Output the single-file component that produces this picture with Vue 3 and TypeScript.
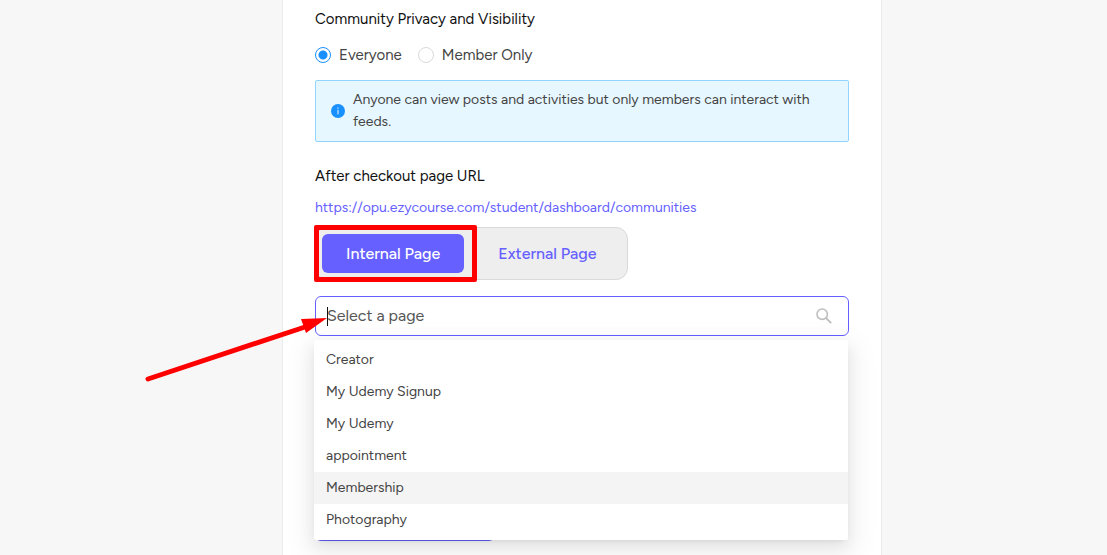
<script setup lang="ts">
import { ref } from 'vue'

type Visibility = 'everyone' | 'members'
type PageKind = 'internal' | 'external'

const visibility = ref<Visibility>('everyone')
const pageKind = ref<PageKind>('internal')
const search = ref('')
const activePage = ref('Membership')
const pages: string[] = ['Creator', 'My Udemy Signup', 'My Udemy', 'appointment', 'Membership', 'Photography']
</script>

<template>
  <div class="page">
    <main class="card">
      <fieldset class="privacy">
        <legend class="heading">Community Privacy and Visibility</legend>
        <div class="radios">
          <label class="radio">
            <input v-model="visibility" type="radio" name="visibility" value="everyone" />
            <span>Everyone</span>
          </label>
          <label class="radio">
            <input v-model="visibility" type="radio" name="visibility" value="members" />
            <span>Member Only</span>
          </label>
        </div>
      </fieldset>

      <div class="alert" role="status">
        <svg class="alert-icon" viewBox="0 0 14 14" aria-hidden="true">
          <circle cx="7" cy="7" r="7" fill="#1890ff" />
          <rect x="6.5" y="3.4" width="1" height="1.3" fill="#e6f7ff" />
          <rect x="6.5" y="5.8" width="1" height="4.6" fill="#e6f7ff" />
        </svg>
        <p>Anyone can view posts and activities but only members can interact with feeds.</p>
      </div>

      <h2 class="heading">After checkout page URL</h2>
      <a class="url" href="https://opu.ezycourse.com/student/dashboard/communities">https://opu.ezycourse.com/student/dashboard/communities</a>

      <div class="tabs">
        <button type="button" class="tab" :class="{ selected: pageKind === 'internal' }" @click="pageKind = 'internal'">Internal Page</button>
        <button type="button" class="tab" :class="{ selected: pageKind === 'external' }" @click="pageKind = 'external'">External Page</button>
        <span class="highlight" aria-hidden="true"></span>
      </div>

      <div class="picker">
        <div class="field">
          <input v-model="search" type="text" placeholder="Select a page" aria-label="Select a page" />
          <span class="caret" aria-hidden="true"></span>
          <svg class="search-icon" viewBox="0 0 16 16" fill="none" stroke="#bfbfbf" aria-hidden="true">
            <circle cx="6.2" cy="6.2" r="5.2" stroke-width="1.6" />
            <path d="M10 10l5.2 5.2" stroke-width="1.9" />
          </svg>
        </div>
        <ul class="options" role="listbox" aria-label="Pages">
          <li
            v-for="page in pages"
            :key="page"
            role="option"
            :aria-selected="page === activePage"
            :class="{ active: page === activePage }"
            @mouseenter="activePage = page"
          >{{ page }}</li>
        </ul>
        <svg class="arrow" viewBox="0 0 182 66" aria-hidden="true">
          <path d="M3 63L160 11" stroke="#f00" stroke-width="5" stroke-linecap="round" />
          <path d="M156 3L182 2L161 17Z" fill="#f00" />
        </svg>
      </div>

      <button type="button" class="save" aria-label="Save"></button>
    </main>
  </div>
</template>

<style>
body {
  margin: 0;
  background: #f7f7f7;
}
</style>

<style scoped>
.page {
  box-sizing: border-box;
  min-height: 100vh;
  padding-left: 57px;
  display: flex;
  justify-content: center;
  overflow: hidden;
  background: #f7f7f7;
  color: #444;
  font-family: Figtree, Lato, "Liberation Sans", sans-serif;
  font-size: 14px;
  font-weight: 400;
  line-height: 22px;
}
.card {
  box-sizing: border-box;
  width: 100%;
  max-width: 600px;
  padding: 8px 32px 14px;
  border: solid #ebebeb;
  border-width: 0 1px;
  background: #fff;
}
.privacy {
  margin: 0;
  padding: 0;
  border: 0;
}
.heading {
  margin: 0;
  padding: 0;
  color: #111;
  font-size: 15px;
  font-weight: 400;
  line-height: 22px;
}
.radios {
  display: flex;
  gap: 16px;
  margin-top: 14px;
}
.radio {
  display: flex;
  align-items: center;
  gap: 8px;
  font-size: 15px;
}
.radio input {
  appearance: none;
  box-sizing: border-box;
  width: 16px;
  height: 16px;
  margin: 0;
  border: 1px solid #d9d9d9;
  border-radius: 50%;
  background: #fff;
}
.radio input:checked {
  border-color: #1890ff;
  background: radial-gradient(circle, #1890ff 4px, #fff 5px);
}
.alert {
  display: flex;
  align-items: center;
  gap: 8px;
  margin-top: 14px;
  padding: 8px 15px;
  border: 1px solid #91d5ff;
  border-radius: 2px;
  background: #e6f7ff;
}
.alert p {
  margin: 0;
}
.alert-icon {
  flex: none;
  width: 14px;
  height: 14px;
}
h2.heading {
  margin-top: 23px;
}
.url {
  display: block;
  margin-top: 10px;
  color: #6560ff;
  text-decoration: none;
}
.tabs {
  position: relative;
  box-sizing: border-box;
  display: flex;
  gap: 10px;
  width: fit-content;
  margin-top: 8px;
  padding: 6px;
  border: 1px solid #d9d9d9;
  border-radius: 12px;
  background: #eee;
}
.tab {
  height: 39px;
  padding: 0 24px;
  border: 0;
  border-radius: 6px;
  background: transparent;
  color: #6560ff;
  font: inherit;
  font-size: 16px;
  font-weight: 500;
}
.tab.selected {
  background: #6560ff;
  color: #fff;
}
.highlight {
  position: absolute;
  top: -3px;
  left: -2px;
  box-sizing: border-box;
  width: 163px;
  height: 57px;
  border: 5px solid #f00;
  border-radius: 2px;
  pointer-events: none;
}
.picker {
  position: relative;
  margin-top: 16px;
}
.field {
  position: relative;
  box-sizing: border-box;
  display: flex;
  align-items: center;
  height: 40px;
  padding: 0 16px 0 11px;
  border: 1px solid #6560ff;
  border-radius: 6px;
  background: #fff;
}
.field input {
  flex: 1;
  min-width: 0;
  padding: 0;
  border: 0;
  outline: 0;
  background: transparent;
  color: #444;
  font: inherit;
  font-size: 16px;
}
.field input::placeholder {
  color: #555;
  opacity: 1;
}
.caret {
  position: absolute;
  top: 10px;
  left: 11px;
  width: 1px;
  height: 19px;
  background: #111;
}
.search-icon {
  flex: none;
  width: 16px;
  height: 16px;
}
.options {
  position: absolute;
  z-index: 1;
  top: 44px;
  left: -1px;
  box-sizing: border-box;
  width: 100%;
  margin: 0;
  padding: 4px 0;
  border-radius: 2px;
  background: #fff;
  box-shadow: 0 3px 6px -4px rgba(0, 0, 0, 0.12), 0 6px 16px rgba(0, 0, 0, 0.08), 0 9px 28px 8px rgba(0, 0, 0, 0.05);
  list-style: none;
}
.options li {
  padding: 5px 12px;
}
.options .active {
  background: #f4f4f4;
}
.arrow {
  position: absolute;
  z-index: 2;
  top: 20px;
  left: -170px;
  width: 182px;
  height: 66px;
  pointer-events: none;
}
.save {
  display: block;
  width: 180px;
  height: 40px;
  margin-top: 165px;
  border: 0;
  border-radius: 6px;
  background: #6560ff;
}
</style>
